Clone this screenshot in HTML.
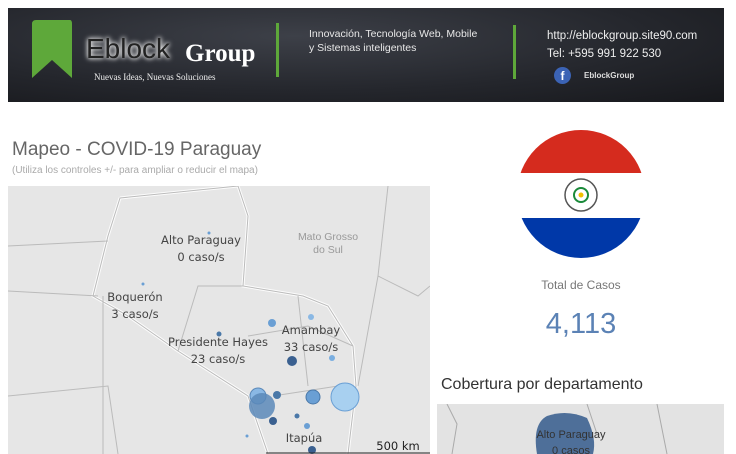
<!DOCTYPE html>
<html><head><meta charset="utf-8"><style>
body{margin:0;width:736px;height:454px;overflow:hidden;background:#fff;font-family:"Liberation Sans","DejaVu Sans",sans-serif;position:relative}
.a{position:absolute}
</style></head><body>
<div class="a" style="left:8px;top:8px;width:716px;height:94px;background:radial-gradient(ellipse at 40% 30%,#3d4048 0%,#24262c 60%,#17181c 100%)"></div>
<svg class="a" style="left:30px;top:18px" width="44" height="62"><path d="M2 6 Q2 2 6 2 L40 2 Q42 2 42 6 L42 60 L22 42 L2 60Z" fill="#5ea83a"/></svg>
<div class="a" style="left:86px;top:33px;font-size:28px;color:#222;text-shadow:0 0 4px #fff,0 0 6px #ddd">Eblock</div>
<div class="a" style="left:185px;top:40px;font-size:25px;color:#fff;font-family:'Liberation Serif',serif;font-weight:bold">Group</div>
<div class="a" style="left:94px;top:72px;font-size:9px;color:#eee;font-family:'Liberation Serif',serif">Nuevas Ideas, Nuevas Soluciones</div>
<div class="a" style="left:276px;top:23px;width:3px;height:54px;background:#5ea83a"></div>
<div class="a" style="left:309px;top:27px;font-size:10.5px;color:#e8e8e8;line-height:14px">Innovación, Tecnología Web, Mobile<br>y Sistemas inteligentes</div>
<div class="a" style="left:513px;top:25px;width:3px;height:54px;background:#5ea83a"></div>
<div class="a" style="left:547px;top:27px;font-size:11.5px;color:#eee;line-height:18px">http://eblockgroup.site90.com<br>Tel: +595 991 922 530</div>
<div class="a" style="left:554px;top:67px;width:17px;height:17px;border-radius:50%;background:#3b63b5;color:#fff;font-size:12px;font-weight:bold;text-align:center;line-height:18px">f</div>
<div class="a" style="left:584px;top:71px;font-size:8px;color:#ddd;font-weight:bold">EblockGroup</div>

<div class="a" style="left:12px;top:139px;font-size:19px;color:#666">Mapeo - COVID-19 Paraguay</div>
<div class="a" style="left:12px;top:165px;font-size:10px;color:#aaa">(Utiliza los controles +/- para ampliar o reducir el mapa)</div>

<svg class="a" style="left:8px;top:186px" width="422" height="268">
<rect width="422" height="268" fill="#e6e6e6"/>
<g fill="none" stroke="#fff" stroke-width="3" opacity=".9">
<path d="M112 12 L230 0 M230 0 L240 30 L235 100 L295 110 L320 120 L345 160 L348 200 L340 268"/>
<path d="M112 12 L100 50 L85 110 L120 130 L170 165 L240 210 L260 268"/>
</g>
<g fill="none" stroke="#bbb" stroke-width="1">
<path d="M112 12 L230 0 L240 30 L235 100 L295 110 L320 120 L345 160 L348 200 L340 268"/>
<path d="M112 12 L100 50 L85 110 L120 130 L170 165 L240 210 L260 268"/>
<path d="M0 60 L100 55 M0 105 L90 110 M95 110 L95 268 M0 210 L100 200 L110 268 M170 165 L190 100 L235 100 M240 150 L300 140 L345 160 M265 210 L330 200 M290 110 L300 200"/>
<path d="M380 0 L370 90 L410 110 L422 100 M370 90 L350 200"/>
</g>
<circle cx="201" cy="47" r="1.5" fill="#6a9fd4"/><circle cx="135" cy="98" r="1.5" fill="#6a9fd4"/>
<circle cx="211" cy="148" r="2.5" fill="#4a78a8"/><circle cx="264" cy="137" r="4" fill="#6a9fd4"/>
<circle cx="303" cy="131" r="3" fill="#8ab8e4"/><circle cx="284" cy="175" r="5" fill="#3a6090"/>
<circle cx="324" cy="172" r="3" fill="#7aaee0"/><circle cx="250" cy="210" r="8" fill="#8ab8e4" stroke="#5a88b8"/>
<circle cx="254" cy="220" r="13" fill="#5a88b8" opacity=".85"/><circle cx="269" cy="209" r="4" fill="#4a78a8"/>
<circle cx="305" cy="211" r="7" fill="#6a9fd4" stroke="#4a78a8"/><circle cx="337" cy="211" r="14" fill="#a8d0f0" stroke="#6a9fd4"/>
<circle cx="265" cy="235" r="4" fill="#3a6090"/><circle cx="289" cy="230" r="2.5" fill="#4a78a8"/>
<circle cx="299" cy="240" r="3" fill="#6a9fd4"/><circle cx="239" cy="250" r="1.5" fill="#6a9fd4"/>
<circle cx="304" cy="264" r="4" fill="#3a6090"/>
<g font-size="11.5" fill="#444" text-anchor="middle" font-family="DejaVu Sans,sans-serif">
<text x="193" y="58">Alto Paraguay</text><text x="193" y="75">0 caso/s</text>
<text x="127" y="115">Boquerón</text><text x="127" y="132">3 caso/s</text>
<text x="210" y="160">Presidente Hayes</text><text x="210" y="177">23 caso/s</text>
<text x="303" y="148">Amambay</text><text x="303" y="165">33 caso/s</text>
<text x="296" y="256">Itapúa</text>
<text x="390" y="264" fill="#222">500 km</text>
</g>
<text x="320" y="54" font-size="10.5" fill="#999" text-anchor="middle">Mato Grosso</text>
<text x="320" y="67" font-size="10.5" fill="#999" text-anchor="middle">do Sul</text>
<line x1="258" y1="267" x2="422" y2="267" stroke="#222"/>
</svg>

<svg class="a" style="left:517px;top:128px" width="128" height="133">
<defs><clipPath id="c"><circle cx="64" cy="66" r="64"/></clipPath></defs>
<g clip-path="url(#c)"><rect width="128" height="45" y="0" fill="#d52b1e"/><rect y="45" width="128" height="45" fill="#fff"/><rect y="90" width="128" height="45" fill="#0038a8"/></g>
<circle cx="64" cy="67" r="16" fill="#fff" stroke="#555" stroke-width="1.5"/><circle cx="64" cy="67" r="7" fill="none" stroke="#1a8a3a" stroke-width="2"/><circle cx="64" cy="67" r="2.5" fill="#f0c000"/>
</svg>
<div class="a" style="left:517px;top:278px;width:128px;text-align:center;font-size:12px;color:#777">Total de Casos</div>
<div class="a" style="left:517px;top:308px;width:128px;text-align:center;font-size:29px;color:#5b82b5">4,113</div>
<div class="a" style="left:441px;top:376px;font-size:16px;color:#333">Cobertura por departamento</div>
<svg class="a" style="left:437px;top:404px" width="287" height="50">
<rect width="287" height="50" fill="#e3e3e3"/>
<path d="M100 50 Q95 20 110 12 Q130 5 150 14 Q160 35 156 50Z" fill="#4e6f99"/>
<path d="M10 0 L20 20 L15 50 M150 0 L160 30 M220 0 L230 50" stroke="#aaa" fill="none"/>
<text x="134" y="34" font-size="11" fill="#333" text-anchor="middle">Alto Paraguay</text>
<text x="134" y="50" font-size="11" fill="#333" text-anchor="middle">0 casos</text>
</svg>
</body></html>
